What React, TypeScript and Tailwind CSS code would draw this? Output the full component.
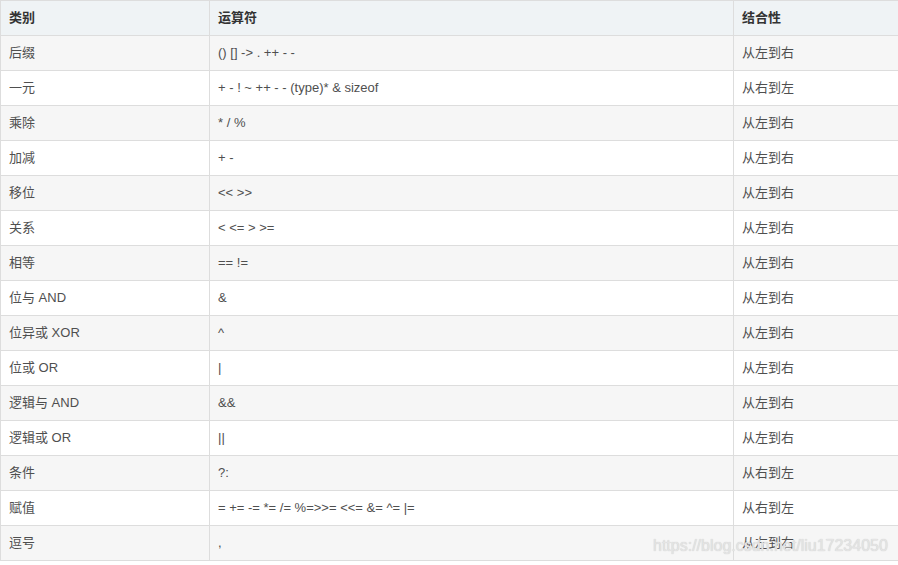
const rows: [string, string, string][] = [
  ["后缀", "() [] -> . ++ - -", "从左到右"],
  ["一元", "+ - ! ~ ++ - - (type)* & sizeof", "从右到左"],
  ["乘除", "* / %", "从左到右"],
  ["加减", "+ -", "从左到右"],
  ["移位", "<< >>", "从左到右"],
  ["关系", "< <= > >=", "从左到右"],
  ["相等", "== !=", "从左到右"],
  ["位与 AND", "&", "从左到右"],
  ["位异或 XOR", "^", "从左到右"],
  ["位或 OR", "|", "从左到右"],
  ["逻辑与 AND", "&&", "从左到右"],
  ["逻辑或 OR", "||", "从左到右"],
  ["条件", "?:", "从右到左"],
  ["赋值", "= += -= *= /= %=>>= <<= &= ^= |=", "从右到左"],
  ["逗号", ",", "从左到右"],
];

export default function App() {
  return (
    <div className="relative w-[898px] h-[565px] bg-white font-['Liberation_Sans','Noto_Sans_CJK_SC',sans-serif] text-[13px] text-[#4f4f4f]">
      <table className="w-[898px] table-fixed border-collapse">
        <colgroup>
          <col className="w-[209px]" />
          <col className="w-[524px]" />
          <col className="w-[165px]" />
        </colgroup>
        <thead>
          <tr className="bg-[#eff3f5] h-[35px]">
            <th className="border border-[#dddddd] px-[8px] text-left font-bold text-[#333]">类别</th>
            <th className="border border-[#dddddd] px-[8px] text-left font-bold text-[#333]">运算符</th>
            <th className="border border-[#dddddd] border-r-0 px-[8px] text-left font-bold text-[#333]">结合性</th>
          </tr>
        </thead>
        <tbody>
          {rows.map((r, i) => (
            <tr key={i} className={i % 2 === 0 ? "bg-[#f6f6f6] h-[35px]" : "bg-white h-[35px]"}>
              <td className="border border-[#dddddd] px-[8px]">{r[0]}</td>
              <td className="border border-[#dddddd] px-[8px]">{r[1]}</td>
              <td className="border border-[#dddddd] border-r-0 px-[8px]">{r[2]}</td>
            </tr>
          ))}
        </tbody>
      </table>
      {/* watermark */}
      <div className="absolute left-[653px] top-[538px] whitespace-nowrap text-[16px] leading-[16px] text-[#e4e4e4] [text-shadow:0_0_1px_#c4c4c4] font-['Liberation_Sans',sans-serif]">
        https://blog.csdn.net/liu17234050
      </div>
    </div>
  );
}
